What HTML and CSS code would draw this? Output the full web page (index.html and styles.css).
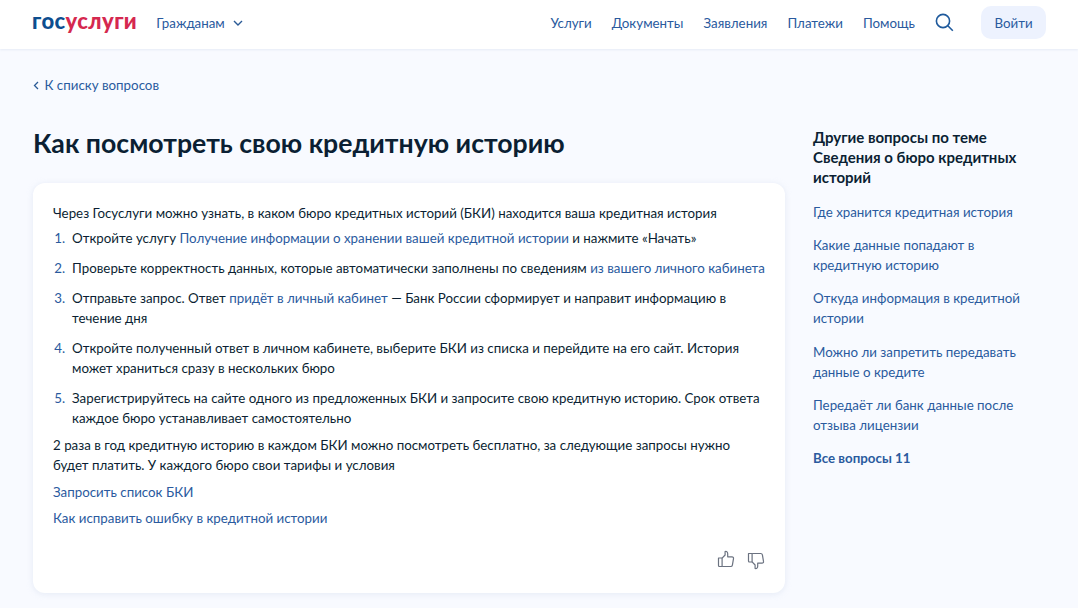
FILE: index.html
```html
<!DOCTYPE html>
<html lang="ru">
<head>
    <meta charset="UTF-8">
    <title>Как посмотреть свою кредитную историю</title>
    <link rel="stylesheet" href="styles.css">
</head>
<body>
    <header class="header">
        <a class="logo" href="#"><span class="logo-blue">гос</span><span class="logo-red">услуги</span></a>
        <a class="role" href="#">Гражданам
            <svg class="role-arrow" width="10" height="6" viewBox="0 0 10 6" fill="none"><path d="M1 1l4 4 4-4" stroke="#2a5a96" stroke-width="1.4"/></svg>
        </a>
        <nav class="nav">
            <a href="#">Услуги</a>
            <a href="#">Документы</a>
            <a href="#">Заявления</a>
            <a href="#">Платежи</a>
            <a href="#">Помощь</a>
        </nav>
        <svg class="search" width="19" height="19" viewBox="0 0 19 19" fill="none">
            <circle cx="8" cy="8" r="6.6" stroke="#1f5a9c" stroke-width="1.6"/>
            <path d="M12.8 12.8l5 5" stroke="#1f5a9c" stroke-width="1.6"/>
        </svg>
        <button class="login">Войти</button>
    </header>

    <div class="page">
        <a class="back" href="#">
            <svg width="6" height="9" viewBox="0 0 6 9" fill="none"><path d="M5 1L1.5 4.5 5 8" stroke="#2a5a96" stroke-width="1.3"/></svg>
            К списку вопросов
        </a>

        <div class="columns">
            <main class="main">
                <h1>Как посмотреть свою кредитную историю</h1>
                <div class="card">
                    <p class="card-intro">Через Госуслуги можно узнать, в каком бюро кредитных историй (БКИ) находится ваша кредитная история</p>
                    <ol class="steps">
                        <li>Откройте услугу <a href="#">Получение информации о хранении вашей кредитной истории</a> и нажмите «Начать»</li>
                        <li>Проверьте корректность данных, которые автоматически заполнены по сведениям <a href="#">из вашего личного кабинета</a></li>
                        <li>Отправьте запрос. Ответ <a href="#">придёт в личный кабинет</a> — Банк России сформирует и направит информацию в течение дня</li>
                        <li>Откройте полученный ответ в личном кабинете, выберите БКИ из списка и перейдите на его сайт. История может храниться сразу в нескольких бюро</li>
                        <li>Зарегистрируйтесь на сайте одного из предложенных БКИ и запросите свою кредитную историю. Срок ответа каждое бюро устанавливает самостоятельно</li>
                    </ol>
                    <p>2 раза в год кредитную историю в каждом БКИ можно посмотреть бесплатно, за следующие запросы нужно будет платить. У каждого бюро свои тарифы и условия</p>
                    <p class="card-link"><a href="#">Запросить список БКИ</a></p>
                    <p><a href="#">Как исправить ошибку в кредитной истории</a></p>
                    <div class="rating">
                        <svg width="18" height="18" viewBox="0 0 18 18" fill="none" stroke="#6b7280" stroke-width="1.2" stroke-linejoin="round">
                            <path d="M1.5 8h3.6v8.5H2.5a1 1 0 0 1-1-1z"/>
                            <path d="M5.1 8.2l3-3.2V1.6c1.6-.5 2.6.6 2.6 2.1v3.100h4.300c1.100 0 1.700.8 1.500 1.800l-1.100 6.500c-.2.900-.8 1.400-1.700 1.400H5.100"/>
                        </svg>
                        <svg class="thumb-down" width="18" height="18" viewBox="0 0 18 18" fill="none" stroke="#6b7280" stroke-width="1.2" stroke-linejoin="round">
                            <path d="M1.5 1.500h3.600v8.500H2.500a1 1 0 0 1-1-1z"/>
                            <path d="M5.100 9.800l3 3.200v3.400c1.600.5 2.600-.6 2.600-2.100v-3.100h4.300c1.100 0 1.700-.8 1.500-1.800l-1.100-6.500c-.2-.9-.8-1.400-1.700-1.400H5.100"/>
                        </svg>
                    </div>
                </div>
            </main>

            <aside class="side">
                <h2>Другие вопросы по теме Сведения о бюро кредитных историй</h2>
                <a href="#">Где хранится кредитная история</a>
                <a href="#">Какие данные попадают в кредитную историю</a>
                <a href="#">Откуда информация в кредитной истории</a>
                <a href="#">Можно ли запретить передавать данные о кредите</a>
                <a href="#">Передаёт ли банк данные после отзыва лицензии</a>
                <a class="side-all" href="#">Все вопросы 11</a>
            </aside>
        </div>
    </div>
</body>
</html>
```

FILE: styles.css
```css
* {
    box-sizing: border-box;
}

body {
    margin: 0;
    height: 608px;
    overflow: hidden;
    background: #f8faff;
    color: #0b1f33;
    font-family: "Lato", "Noto Sans", sans-serif;
    font-size: 13.33px;
    line-height: 20px;
}

a {
    color: #2a5a9e;
    text-decoration: none;
}

/* Header */
.header {
    display: flex;
    align-items: center;
    height: 49px;
    padding: 0 32px 4px;
    background: #fff;
    box-shadow: 0 1px 2px rgba(200, 210, 230, 0.35);
}

.logo {
    margin-bottom: 3px;
    font-size: 22px;
    font-weight: 900;
    line-height: 24px;
    letter-spacing: 0.4px;
}

.logo-blue {
    color: #0d4e8f;
}

.logo-red {
    color: #d5284f;
}

.role {
    display: flex;
    align-items: center;
    gap: 8px;
    margin-left: 19px;
}

.nav {
    display: flex;
    gap: 20px;
    margin-left: auto;
}

.search {
    margin-left: 20px;
}

.login {
    width: 65px;
    height: 33px;
    margin-left: 27px;
    border: none;
    border-radius: 10px;
    background: #edf2fe;
    color: #2a5a9e;
    font: inherit;
}

/* Page */
.page {
    padding: 26px 32px 0 33px;
}

.back {
    display: flex;
    align-items: center;
    gap: 5.5px;
}

.columns {
    display: flex;
    gap: 28px;
    margin-top: 30px;
}

.main {
    width: 752px;
    flex: none;
}

h1 {
    margin: 0 0 22px;
    font-size: 26.67px;
    line-height: 36px;
    font-weight: 700;
}

.card {
    height: 410px;
    padding: 20px 20px 0;
    background: #fff;
    border-radius: 12px;
    box-shadow: 0 1px 6px rgba(200, 210, 230, 0.4);
}

.card p {
    margin: 0 0 6.67px;
}

.card .card-intro {
    margin-bottom: 4.67px;
}

.card .card-link {
    margin-bottom: 6px;
}

.steps {
    margin: 0 0 7.67px;
    padding: 0 0 0 19px;
}

.steps li {
    margin-bottom: 10px;
}

.steps li:last-child {
    margin-bottom: 0;
}

.steps li::marker {
    content: counter(list-item) ".\00a0\00a0";
    color: #2a5a9e;
}

.rating {
    display: flex;
    justify-content: flex-end;
    gap: 12px;
    margin-top: 22px;
}

.thumb-down {
    margin-top: 2px;
}

/* Sidebar */
.side {
    display: flex;
    flex-direction: column;
    gap: 13.33px;
    width: 233px;
    padding-top: 2.4px;
}

.side h2 {
    margin: 0 0 1px;
    font-size: 15px;
    line-height: 20px;
    font-weight: 700;
}

.side-all {
    font-weight: 700;
}
```
